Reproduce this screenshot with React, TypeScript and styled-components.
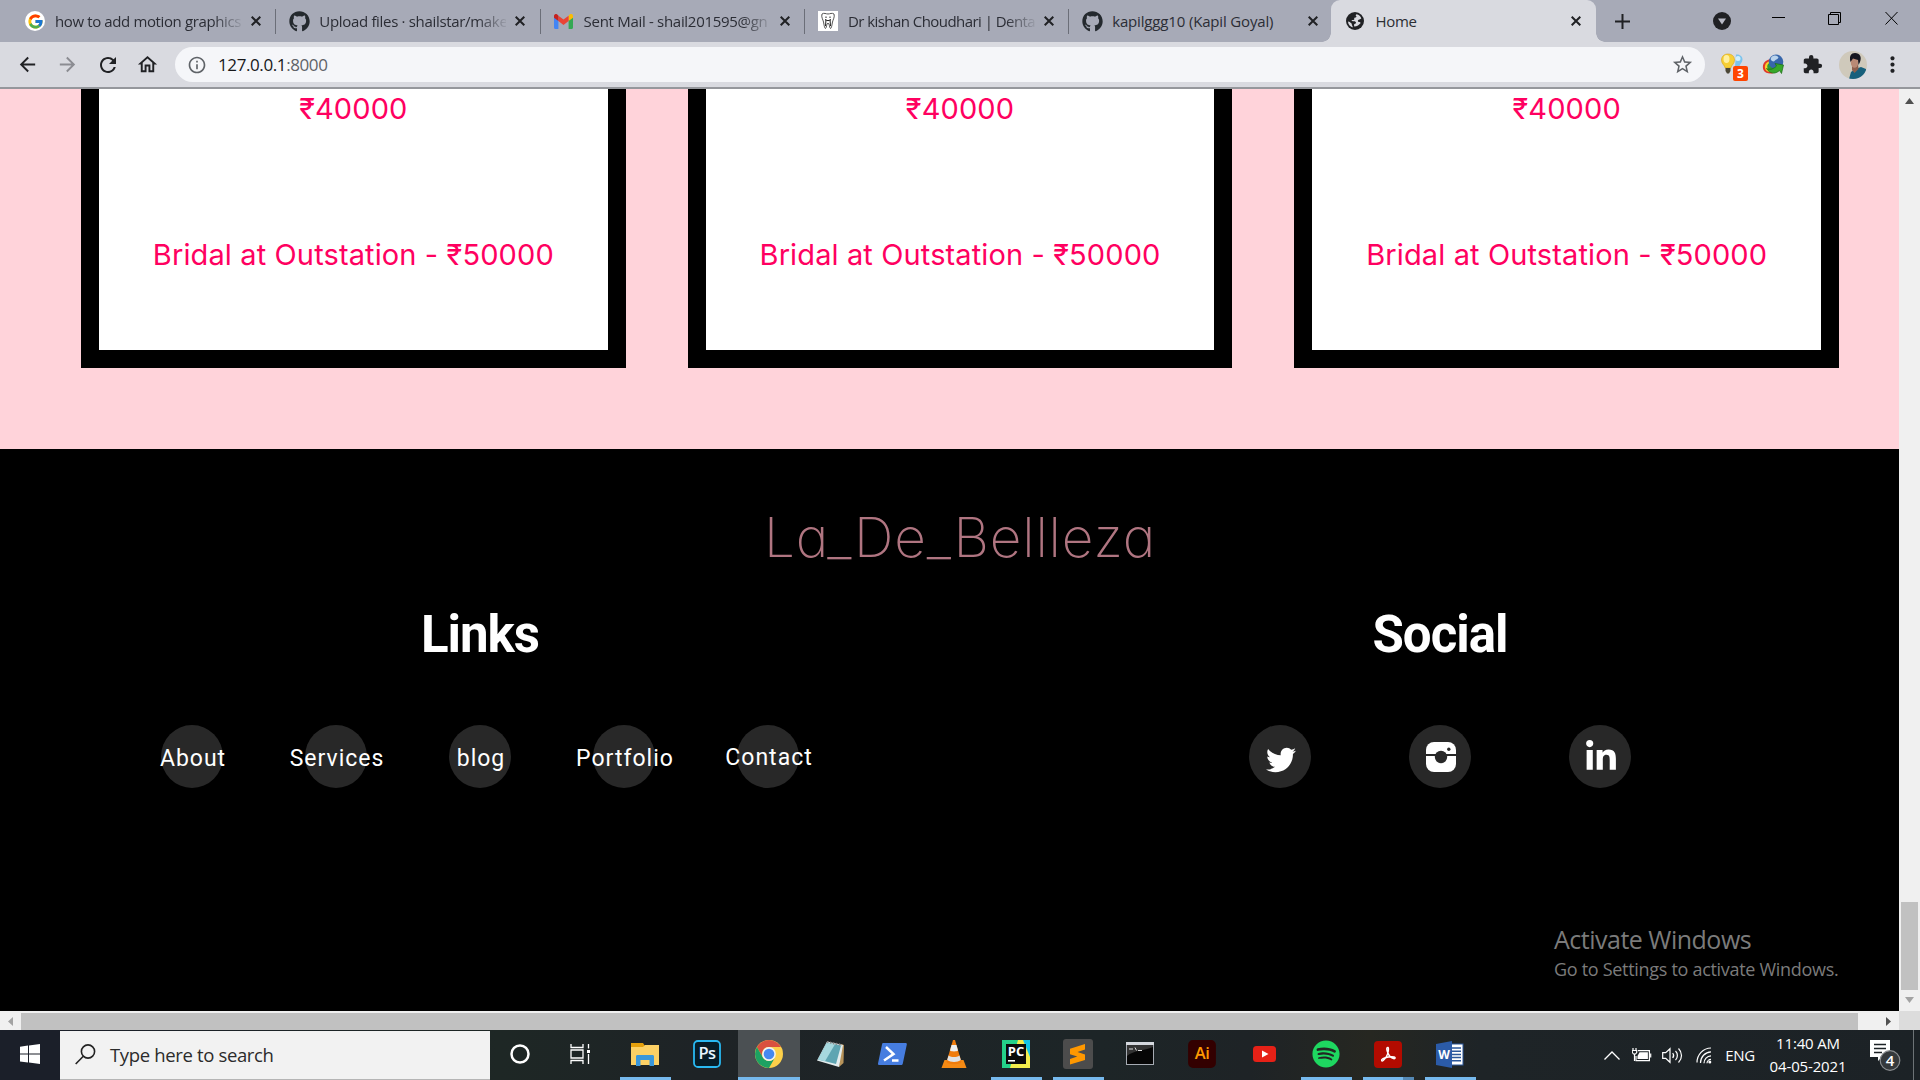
import React from "react";
import styled, { createGlobalStyle, css } from "styled-components";
import { FcGoogle } from "react-icons/fc";
import { FaGithub, FaTwitter, FaLinkedinIn, FaSpotify } from "react-icons/fa";
import { MdArrowBack, MdArrowForward, MdRefresh, MdExtension, MdInfoOutline, MdStarBorder, MdOutlineHome, MdMoreVert } from "react-icons/md";

const Global = createGlobalStyle`
  * { box-sizing: border-box; }
  body { margin: 0; overflow: hidden; background: #000; }
  svg { display: block; flex: none; }
`;

const Desktop = styled.div`
  font-family: "Open Sans", "Noto Sans", sans-serif;
  width: 1920px;
  height: 1080px;
  display: flex;
  flex-direction: column;
  overflow: hidden;
  white-space: nowrap;
`;

/* ---------- browser chrome ---------- */

const TabStrip = styled.header`
  height: 42px;
  background: #a7aab7;
  display: flex;
  padding-left: 12px;
`;

const Tab = styled.div<{ $active?: boolean; $divider?: boolean }>`
  position: relative;
  width: 264.3px;
  height: 42px;
  display: flex;
  align-items: center;
  padding-left: 13px;
  flex: none;
  border-radius: 9px 9px 0 0;
  background: ${(p) => (p.$active ? "#d9dae0" : "transparent")};
  color: ${(p) => (p.$active ? "#2c2e33" : "#2b2d35")};
  ${(p) => p.$divider && css`
    &::after {
      content: "";
      position: absolute;
      right: 0;
      top: 9px;
      width: 1px;
      height: 25px;
      background: #6b6e78;
    }
  `}
  ${(p) => p.$active && css`
    margin-left: -2px;
    padding-left: 14px;
    width: 265px;
    &::before, &::after {
      content: "";
      position: absolute;
      bottom: 0;
      width: 9px;
      height: 9px;
    }
    &::before { left: -9px; background: radial-gradient(circle at 0 0, transparent 8.5px, #d9dae0 9px); }
    &::after { right: -9px; background: radial-gradient(circle at 100% 0, transparent 8.5px, #d9dae0 9px); }
  `}
`;

const Favicon = styled.span`
  width: 20px;
  height: 20px;
  margin-right: 10px;
  display: flex;
  align-items: center;
  justify-content: center;
`;

const GoogleDisc = styled.span`
  width: 20px;
  height: 20px;
  border-radius: 50%;
  background: #fff;
  display: grid;
  place-items: center;
`;

const TabTitle = styled.span<{ $fade?: boolean; $track: number }>`
  width: 187px;
  font-size: 15px;
  letter-spacing: ${(p) => p.$track}px;
  line-height: 20px;
  margin-right: 9px;
  ${(p) => p.$fade && css`mask-image: linear-gradient(90deg, #000 158px, transparent 190px);`}
`;

const StripTools = styled.div`
  flex: 1;
  display: flex;
  align-items: center;
  justify-content: space-between;
  padding-left: 19px;
`;

const WindowButtons = styled.div`
  display: grid;
  grid-template-columns: 56px 56px 56px 58px;
  justify-items: center;
  align-items: center;
`;

const Toolbar = styled.div`
  height: 47px;
  background: #d9dae0;
  border-bottom: 2px solid #95979c;
  display: flex;
  align-items: center;
  color: #202124;
`;

const NavButton = styled.span<{ $w: number; $dim?: boolean }>`
  width: ${(p) => p.$w}px;
  display: flex;
  justify-content: center;
  color: ${(p) => (p.$dim ? "#8b8c92" : "#202124")};
`;

const NavGroup = styled.nav`
  width: 175px;
  display: flex;
  padding-left: 7px;
`;

const AddressBar = styled.div`
  width: 1530px;
  height: 35px;
  border-radius: 18px;
  background: #f5f6f9;
  display: flex;
  align-items: center;
  padding: 0 11px 0 12px;
  color: #5f6368;
`;

const Url = styled.span`
  flex: 1;
  margin-left: 11px;
  font-size: 17px;
  letter-spacing: -0.4px;
  line-height: 24px;
  b { font-weight: 400; color: #17181a; }
`;

const Extensions = styled.div`
  display: grid;
  grid-template-columns: 42px 39px 40px 41px 39px;
  justify-items: center;
  align-items: center;
  margin-left: 6px;
`;

const BadgeHost = styled.span`
  position: relative;
  display: flex;
`;

const CountBadge = styled.span`
  position: absolute;
  left: 13px;
  top: 14px;
  width: 15px;
  height: 15px;
  border-radius: 2px;
  background: #ff4500;
  color: #fff;
  font-size: 12px;
  font-weight: 700;
  line-height: 16px;
  text-align: center;
`;

/* ---------- web page ---------- */

const Viewport = styled.main`
  height: 941px;
  display: grid;
  grid-template: 922px 19px / 1899px 21px;
  position: relative;
`;

const PageClip = styled.div`
  overflow: hidden;
`;

const Page = styled.div`
  width: 1920px;
`;

const Packages = styled.section`
  height: 360px;
  background: #ffd3da;
  padding: 0 81px;
  display: flex;
  gap: 62px;
`;

const PackageCard = styled.article`
  flex: 1;
  height: 279px;
  background: #fff;
  border: 18px solid #000;
  border-top: 0;
  display: flex;
  flex-direction: column;
  align-items: center;
  gap: 106px;
`;

const Price = styled.p`
  margin: 0;
  font-family: Inter, "Noto Sans", sans-serif;
  font-size: 29px;
  letter-spacing: 0.12px;
  line-height: 40px;
  color: #ff0060;
`;

const Footer = styled.footer`
  height: 562px;
  background: #000;
  color: #fff;
  padding-top: 55px;
`;

const Brand = styled.div`
  font-family: Inter, sans-serif;
  font-weight: 250;
  font-size: 55px;
  font-feature-settings: "cv11";
  line-height: 66px;
  letter-spacing: 0.8px;
  text-align: center;
  color: #b07581;
`;

const FooterColumns = styled.div`
  margin-top: 35px;
  display: grid;
  grid-template-columns: 1fr 1fr;
`;

const FooterColumn = styled.div`
  display: flex;
  flex-direction: column;
  align-items: center;
  gap: 60px;
`;

const FooterTitle = styled.h2`
  margin: 0;
  font: 700 51px/60px Roboto, sans-serif;
  letter-spacing: -1px;
`;

const CircleRow = styled.div<{ $gap: number }>`
  display: flex;
  gap: ${(p) => p.$gap}px;
`;

const Circle = styled.a<{ $drop?: number }>`
  width: 62px;
  height: 63px;
  border-radius: 50%;
  background: #282828;
  display: flex;
  align-items: center;
  justify-content: center;
  padding: ${(p) => p.$drop ?? 0}px 0 0 2px;
  font: 450 23px/30px Roboto, sans-serif;
  letter-spacing: 1px;
  color: #fff;
`;

const Watermark = styled.aside`
  position: absolute;
  left: 1554px;
  top: 833px;
  color: #7b7b7b;
  h3 { margin: 0; font-weight: 400; font-size: 25px; line-height: 34px; letter-spacing: -0.5px; }
  p { margin: 1px 0 0; font-size: 18px; line-height: 25px; letter-spacing: -0.3px; }
`;

const VScroll = styled.div`
  background: #f0f0f0;
  display: flex;
  flex-direction: column;
  align-items: center;
  padding: 9px 0 8px;
`;

const VThumb = styled.div`
  width: 17px;
  height: 88px;
  margin: auto 0 7px;
  background: #c1c1c1;
`;

const HScroll = styled.div`
  background: #f0f0f0;
  display: flex;
  align-items: center;
  padding: 2px 8px 0 8px;
`;

const HThumb = styled.div`
  width: 1837px;
  height: 17px;
  margin: 0 28px 0 8px;
  background: #c1c1c1;
`;

const Corner = styled.div`
  background: #dcdcdc;
`;

/* ---------- taskbar ---------- */

const Taskbar = styled.div`
  height: 50px;
  display: flex;
  background: linear-gradient(90deg, #1b1f29 0, #1b1f29 60px, #1e2725 500px, #1e2326 700px, #1d2527 1100px, #1e2326 1250px, #262721 1370px, #1e2427 1480px, #1c2226 100%);
  color: #fff;
`;

const Cell = styled.div<{ $w?: number; $active?: boolean; $running?: boolean }>`
  position: relative;
  width: ${(p) => p.$w ?? 61.95}px;
  flex: none;
  display: flex;
  align-items: center;
  justify-content: center;
  padding-bottom: 2px;
  background: ${(p) => (p.$active ? "#4b5053" : "transparent")};
  ${(p) => (p.$running || p.$active) && css`
    &::after {
      content: "";
      position: absolute;
      bottom: 0;
      left: ${p.$active ? 0 : 6}px;
      right: ${p.$active ? 0 : 5}px;
      height: 3px;
      background: #76b9ed;
    }
  `}
`;

const StackedCell = styled(Cell)`
  &::before {
    content: "";
    position: absolute;
    bottom: 0;
    right: 5px;
    width: 11px;
    height: 3px;
    background: #5589b5;
    z-index: 1;
  }
`;

const Search = styled.div`
  width: 429.5px;
  height: 49px;
  margin-top: 1px;
  background: #f2f2f2;
  border-bottom: 1px solid #b5b5b5;
  display: flex;
  align-items: center;
  gap: 14px;
  padding: 0 0 2px 15px;
  color: #2b2b2b;
  font-size: 18.5px;
  letter-spacing: -0.35px;
`;

const Tray = styled.div`
  margin-left: auto;
  display: grid;
  grid-template-columns: 30px 30px 30px 34px 38px 98px 56px 7px;
  justify-items: center;
  align-items: center;
  font-size: 15px;
`;

const Lang = styled.span`
  letter-spacing: -0.3px;
`;

const Clock = styled.div`
  display: flex;
  flex-direction: column;
  align-items: center;
  line-height: 23px;
  letter-spacing: -0.15px;
`;

const Peek = styled.div`
  width: 1px;
  height: 50px;
  background: #6d7376;
  justify-self: start;
`;

/* ---------- icons ---------- */

const Cross = () => (
  <svg width="10" height="10" viewBox="0 0 10 10"><path d="M.7.7l8.6 8.6M9.3.7L.7 9.3" stroke="#202124" strokeWidth="2" /></svg>
);

const Gmail = () => (
  <svg width="19" height="15" viewBox="0 0 19 15">
    <path d="M0 3v10.5C0 14.3.6 15 1.4 15H4.4V6z" fill="#4285f4" />
    <path d="M14.6 6v9h3c.8 0 1.4-.7 1.4-1.500V3z" fill="#34a853" />
    <path d="M14.6 1.7V7L19 3.7V2c0-1.800-2-2.700-3.300-1.600z" fill="#fbbc04" />
    <path d="M4.400 7V1.700l5.100 3.900 5.100-3.900V7l-5.100 3.900z" fill="#ea4335" />
    <path d="M0 2v1.700L4.400 7V1.700L3.300.4C2-.6 0 .2 0 2z" fill="#c5221f" />
  </svg>
);

const Tooth = () => (
  <svg width="20" height="20" viewBox="0 0 20 20">
    <rect width="20" height="20" fill="#fff" />
    <path d="M4 3c2-1.500 4 0 6 0s4-1.500 6 0c1 3-1 5.500-1.500 8S13.500 17.500 12.500 17.500 11.500 12 10 12 8.500 17.500 7.500 17.500 6 13.500 5.500 11 3 6 4 3z" fill="none" stroke="#555" strokeWidth="1" />
    <path d="M8 5.500v1.500M12 5.500v1.500M7 8.500c2 1.500 4 1.500 6 0M8 8.500l-.5 6.500M12 8.500l.5 6.500" fill="none" stroke="#222" strokeWidth="1" />
  </svg>
);

const Globe = () => (
  <svg width="18" height="18" viewBox="0 0 18 18">
    <circle cx="9" cy="9" r="9" fill="#202124" />
    <path d="M10.500 2.200c-1 .5-1 1.500-.2 2 .6.500-.2 1.300-1.200 1.300-.9 0-1 .8-.8 1.500.2.700-.6 1-1.400 1H5.500c.2 1 1 1.200 2.200 1.200 1.500 0 2.300.7 2.300 1.600 0 .8-.8 1-1.500 1.200-.6.200-.4 1.300-.3 2.500 3-.2 5-1.500 6.500-3.500-.8-1.200-2-.6-2.600-1.400-.7-.9.200-1.900 1.300-2.100 1-.2 1.200-1 1.900-1-.5-2.200-2.300-4-4.800-4.300z" fill="#d9dae0" />
    <path d="M2 9.500c1.500 0 2.300 1 3.300 1.800.8.700.3 1.700 1 2.500.4.500.4 1.200.4 1.600C4 14.500 2 12.400 2 9.500z" fill="#d9dae0" />
  </svg>
);

const Bulbs = () => (
  <svg width="24" height="26" viewBox="0 0 24 26">
    <path d="M16 2.500c4-.5 6.500 2 6.500 5 0 3-2.500 4-3 7H15z" fill="#7cc3ec" />
    <circle cx="18" cy="6.500" r="2.500" fill="#d0eefc" />
    <path d="M8 2C4 2 1.500 4.500 1.500 8c0 4 3.200 5 3.700 8h5.600c.5-3 3.700-4 3.700-8C14.500 4.500 12 2 8 2z" fill="#f7cf35" stroke="#d9a514" strokeWidth=".6" />
    <ellipse cx="6.500" cy="7" rx="3" ry="4" fill="#fff0a0" />
    <path d="M5.500 16h5v3L9 21.500H7L5.500 19z" fill="#4b4636" />
  </svg>
);

const Idm = () => (
  <svg width="22" height="22" viewBox="0 0 22 22">
    <path d="M8 5C1 7 0 12 1.500 16c2 4 7 4 10 3l-3-9z" fill="#e03b2b" />
    <path d="M8 7c-5 1.500-6 5.500-4.500 8.500s6 3 8.500 2z" fill="#f6d32c" />
    <path d="M9 8.500c-4 1-4.500 4-3 6.500s6 2 7 1z" fill="#2c9b3a" />
    <circle cx="14" cy="7.800" r="7.300" fill="#3766ab" />
    <path d="M9.500 3c3-2.500 6-1.500 7 .5-.5 2-2.500 1.500-3.500 3s-3 1-4-.5c-.6-1-.2-2 .5-3z" fill="#b9d3ec" />
    <path d="M4.500 14.500c4 2 7.500 0 10-2.500L13 9.500l8.500 1.500-2 8.500-2-3C13 20.500 8 20 4.500 14.500z" fill="#37a82a" stroke="#1b6a14" strokeWidth=".7" />
  </svg>
);

const Avatar = () => (
  <svg width="28" height="28" viewBox="0 0 28 28">
    <defs><clipPath id="face"><circle cx="14" cy="14" r="14" /></clipPath></defs>
    <g clipPath="url(#face)">
      <rect width="28" height="28" fill="#cfc9bb" />
      <path d="M10 28l2-7 4-3 6-2 5 2v10z" fill="#17607c" />
      <path d="M13 13h6l.5 5-4 4-2.500-3z" fill="#8d5f4d" />
      <ellipse cx="15.500" cy="11.500" rx="3.700" ry="5.200" fill="#b98a75" />
      <path d="M11.500 11C10 5 12 2 16 2c5 0 7 4 5 9l-1.500 3L19 9l-5-1.500z" fill="#17161f" />
    </g>
  </svg>
);

const Instagram = () => (
  <svg width="30" height="30" viewBox="0 0 30 30">
    <rect width="30" height="30" rx="8" fill="#fff" />
    <path d="M0 13h30" stroke="#282828" strokeWidth="2" />
    <circle cx="15" cy="15" r="6.200" fill="#282828" />
    <circle cx="22.800" cy="7.200" r="1.700" fill="#282828" />
  </svg>
);

const Windows = () => (
  <svg width="20" height="20" viewBox="0 0 20 20" fill="#fff"><path d="M0 2.800l8-1.200v8H0zM9 1.500L20 0v9.600H9zM0 10.600h8v8l-8-1.200zM9 10.600h11V20L9 18.600z" /></svg>
);

const Magnifier = () => (
  <svg width="21" height="21" viewBox="0 0 21 21" fill="none" stroke="#222" strokeWidth="1.600"><circle cx="13" cy="7.500" r="6.600" /><path d="M8.300 12.200L.7 20" /></svg>
);

const TaskView = () => (
  <svg width="21" height="20" viewBox="0 0 21 20" fill="none" stroke="#fff" strokeWidth="1.300">
    <path d="M1 0v3.500h12V0M1 20v-3.500h12V20M1 6h12v8H1zM18.500 0v4.500M18.500 10v10" /><path d="M17 6h3v3h-3z" fill="#fff" stroke="none" />
  </svg>
);

const Folder = () => (
  <svg width="28" height="24" viewBox="0 0 28 24">
    <path d="M0 1h12l2 3v4H0z" fill="#e5a00c" /><path d="M0 5h12l2-2h14v20H0z" fill="#fdd165" />
    <path d="M5 24V14.500c0-1 .6-1.500 1.500-1.500h15c.9 0 1.500.5 1.500 1.500V24h-4.500v-6h-9v6z" fill="#3b97da" />
  </svg>
);

const AdobeTile = ({ label, fg, bg, edge }: { label: string; fg: string; bg: string; edge: string }) => (
  <svg width="28" height="28" viewBox="0 0 28 28">
    <rect x="1" y="1" width="26" height="26" rx="4" fill={bg} stroke={edge} strokeWidth="1.800" />
    <text x="14" y="19" textAnchor="middle" fontFamily="Open Sans" fontWeight="600" fontSize="16.500" letterSpacing="-.5" fill={fg}>{label}</text>
  </svg>
);

const Chrome = () => (
  <svg width="28" height="28" viewBox="0 0 28 28">
    <circle cx="14" cy="14" r="14" fill="#fdd04a" />
    <path d="M1.900 7A14 14 0 0 1 26.100 7H14a7 7 0 0 0-6.100 10.500z" fill="#d9503f" />
    <path d="M1.900 7A14 14 0 0 0 14 28l6-10.500A7 7 0 0 1 7.900 17.500z" fill="#1da162" />
    <circle cx="14" cy="14" r="6.900" fill="#f1f1f1" /><circle cx="14" cy="14" r="5.300" fill="#4688f1" />
  </svg>
);

const Notepad = () => (
  <svg width="28" height="28" viewBox="0 0 28 28">
    <path d="M24 4l3 1-.5 18-4.500 4z" fill="#b7935a" />
    <path d="M10 1.500L26 5l-4 22L0 20.500z" fill="#e3eced" />
    <path d="M10 2.500L24 5.500l-5 18.500L1 19.500z" fill="#5fa5b2" /><path d="M10 2.500l8 1.700L8 21.200 1 19.500z" fill="#a6d8de" />
    <path d="M10 2l15 3" stroke="#888" strokeWidth="2" strokeDasharray="1.500 1.500" />
  </svg>
);

const PowerShell = () => (
  <svg width="29" height="22" viewBox="0 0 29 22">
    <path d="M5 0h22.500c1 0 1.500.6 1.300 1.500l-4 19c-.2 1-.9 1.500-1.800 1.500H1c-.8 0-1.200-.6-1-1.500l4-19C4.200.6 4.500 0 5 0z" fill="#467de0" />
    <path d="M8 4l7.500 7L6 17.500M14 17.500h6.500" stroke="#fff" strokeWidth="2.500" fill="none" />
  </svg>
);

const Vlc = () => (
  <svg width="26" height="28" viewBox="0 0 26 28">
    <path d="M3.500 20h19l3 8H.5z" fill="#f58a14" />
    <path d="M12 0h2l6.500 22c-2 3-13 3-15 0z" fill="#f07c0c" />
    <path d="M10.500 5h5l1.500 5.500c-2 1.200-6 1.200-8 0z" fill="#eceff1" /><path d="M7.500 15.500c3 2 8 2 11 0l1.300 4.500c-3 2.500-10.500 2.500-13.600 0z" fill="#dfe3e6" />
  </svg>
);

const PyCharm = () => (
  <svg width="28" height="28" viewBox="0 0 28 28">
    <rect width="28" height="28" fill="#24d18a" />
    <path d="M14 0h8l6 14v14H0l2-4z" fill="#f2ec4c" />
    <path d="M0 0h16L8 28H0z" fill="#24d18a" />
    <path d="M21 0h7v17z" fill="#12c3e8" />
    <rect x="4" y="4" width="20" height="20" fill="#0b0b0b" />
    <text x="14" y="15.500" textAnchor="middle" fontFamily="Open Sans" fontWeight="700" fontSize="13" fill="#fff">PC</text>
    <path d="M6 20.800h7" stroke="#fff" strokeWidth="1.600" />
  </svg>
);

const Sublime = () => (
  <svg width="30" height="30" viewBox="0 0 30 30">
    <rect width="30" height="30" rx="3" fill="#4c4c4c" />
    <path d="M22 5v5.500L14.500 13l7.500 2.400V21L7 25.500V20l7.300-2.400L7 15.200V9.700z" fill="#ff9800" />
  </svg>
);

const Terminal = () => (
  <svg width="28" height="24" viewBox="0 0 28 24">
    <rect x=".5" y=".5" width="27" height="22" fill="#060606" stroke="#a6abb3" /><path d="M0 0h28v3H0z" fill="#d5d8de" /><path d="M1 14C8 8 18 9 27 5V3H1z" fill="#333" />
    <path d="M4 6v2M6 6v2M9 5.500l1.500 3M12 8.500h4" stroke="#ddd" strokeWidth="1" />
  </svg>
);

const YouTube = () => (
  <svg width="23" height="16" viewBox="0 0 23 16"><rect width="23" height="16" rx="3.500" fill="#e62117" /><path d="M9 4.500l6.500 3.500L9 11.500z" fill="#fff" /></svg>
);

const Acrobat = () => (
  <svg width="28" height="27" viewBox="0 0 28 27">
    <rect width="28" height="27" rx="4" fill="#b30b00" />
    <path d="M14 6.500c-1.800-.3-1.300 3 0 5.800 1 2.300 3.200 4.800 5.500 5.300 1.800.4 2.300-1.200.5-1.700-2.800-.7-8.500.3-11 1.800-2.300 1.400-1.300 3 .2 1.800 2-1.800 4.500-6 5-9 .3-1.800.5-3.800-.2-4z" fill="none" stroke="#fff" strokeWidth="1.500" />
  </svg>
);

const Word = () => (
  <svg width="28" height="27" viewBox="0 0 28 27">
    <rect x="14" y="3" width="13" height="21" fill="#fff" stroke="#2b579a" />
    <path d="M16 7h9M16 10.200h9M16 13.400h9M16 16.600h9M16 19.800h9" stroke="#2b579a" strokeWidth="1.500" />
    <path d="M0 3L16 0v27L0 24z" fill="#2b5ba8" />
    <text x="8" y="18" textAnchor="middle" fontFamily="Open Sans" fontWeight="700" fontSize="12" fill="#fff">W</text>
  </svg>
);

const Battery = () => (
  <svg width="20" height="14" viewBox="0 0 20 14" fill="none" stroke="#fff" strokeWidth="1.200">
    <path d="M6 2.600h11.400v10H4V8M18.700 5.500v4" /><path d="M7.500 4.300h8.400v6.600H5.500V8z" fill="#fff" stroke="none" />
    <path d="M1 0v2M4 0v2M.3 2.500h4.400v2L3.500 6h-2L.3 4.500zM2.500 6v7" />
  </svg>
);

const Speaker = () => (
  <svg width="21" height="17" viewBox="0 0 21 17" fill="none" stroke="#fff" strokeWidth="1.200">
    <path d="M.7 5.700h3L8 1.700v13.600l-4.300-4h-3zM10.700 6c1.200 1.500 1.200 3.500 0 5M13.500 4c2.500 2.500 2.500 6.500 0 9M16.500 1.500c4 4 4 10 0 14" />
  </svg>
);

const Wifi = () => (
  <svg width="16" height="17" viewBox="0 0 16 17" fill="none" stroke="#fff" strokeWidth="1.200">
    <path d="M1 15.500C1 8 7 1 15 1M4.500 16C4.500 10 9 5 15 4.800M8 16.300c0-4 3-7.300 7-7.500M11 16.300c0-2 1.700-4 4-4" /><circle cx="13.800" cy="15" r="1.500" fill="#fff" stroke="none" />
  </svg>
);

const Notifications = () => (
  <svg width="32" height="34" viewBox="0 0 32 34">
    <path d="M1 2h20v17h-8l-4 4v-4H1z" fill="#fff" /><path d="M5 6.500h12M5 10.500h12M5 14.500h8" stroke="#1c2226" strokeWidth="1.300" />
    <circle cx="21" cy="22.500" r="9.800" fill="#35393c" stroke="#8a8d90" strokeWidth="1.200" />
    <text x="21" y="27.800" textAnchor="middle" fontFamily="Open Sans" fontWeight="600" fontSize="15" fill="#fff">4</text>
  </svg>
);

/* ---------- content ---------- */

const tabs = [
  { title: "how to add motion graphics", icon: <GoogleDisc><FcGoogle size={17} /></GoogleDisc>, fade: true, divider: true, track: -0.38 },
  { title: "Upload files · shailstar/make", icon: <FaGithub size={21} color="#24292e" />, fade: true, divider: true, track: -0.32 },
  { title: "Sent Mail - shail201595@gn", icon: <Gmail />, fade: true, divider: true, track: -0.3 },
  { title: "Dr kishan Choudhari | Denta", icon: <Tooth />, fade: true, divider: true, track: -0.55 },
  { title: "kapilggg10 (Kapil Goyal)", icon: <FaGithub size={21} color="#24292e" />, track: -0.16 },
  { title: "Home", icon: <Globe />, active: true, track: -0.3 },
];

const links = ["About", "Services", "blog", "Portfolio", "Contact"];

const apps = [
  { icon: <Folder />, running: true },
  { icon: <AdobeTile label="Ps" fg="#e8f6ff" bg="#071d28" edge="#29b9f2" /> },
  { icon: <Chrome />, active: true },
  { icon: <Notepad /> },
  { icon: <PowerShell /> },
  { icon: <Vlc /> },
  { icon: <PyCharm />, running: true },
  { icon: <Sublime />, running: true },
  { icon: <Terminal /> },
  { icon: <AdobeTile label="Ai" fg="#ff9a00" bg="#330000" edge="#330000" /> },
  { icon: <YouTube /> },
  { icon: <FaSpotify size={28} color="#1ed760" />, running: true },
];

export default function App() {
  return (
    <Desktop>
      <Global />
      <TabStrip>
        {tabs.map((t) => (
          <Tab key={t.title} $active={t.active} $divider={t.divider}>
            <Favicon>{t.icon}</Favicon>
            <TabTitle $fade={t.fade} $track={t.track}>{t.title}</TabTitle>
            <Cross />
          </Tab>
        ))}
        <StripTools>
          <svg width="15" height="15" viewBox="0 0 15 15"><path d="M7.500 0v15M0 7.500h15" stroke="#202124" strokeWidth="2" /></svg>
          <WindowButtons>
            <svg width="18" height="18" viewBox="0 0 18 18"><circle cx="9" cy="9" r="9" fill="#202124" /><path d="M5 6.500h8L9 12.500z" fill="#b9bbc6" /></svg>
            <svg width="13" height="9" viewBox="0 0 13 9"><path d="M0 .5h13" stroke="#000" /></svg>
            <svg width="13" height="19" viewBox="0 0 13 19" fill="none" stroke="#000"><path d="M.5 2.500h10v10H.5zM2.500 2V.5h10v10H11" /></svg>
            <svg width="13" height="19" viewBox="0 0 13 19"><path d="M.5 0l12 12.500M12.500 0L.5 12.500" stroke="#000" /></svg>
          </WindowButtons>
        </StripTools>
      </TabStrip>
      <Toolbar>
        <NavGroup>
          <NavButton $w={40}><MdArrowBack size={23} /></NavButton>
          <NavButton $w={40} $dim><MdArrowForward size={23} /></NavButton>
          <NavButton $w={41}><MdRefresh size={24} /></NavButton>
          <NavButton $w={38}><MdOutlineHome size={23} /></NavButton>
        </NavGroup>
        <AddressBar>
          <MdInfoOutline size={20} />
          <Url><b>127.0.0.1</b>:8000</Url>
          <MdStarBorder size={23} />
        </AddressBar>
        <Extensions>
          <BadgeHost><Bulbs /><CountBadge>3</CountBadge></BadgeHost>
          <Idm />
          <MdExtension size={21} />
          <Avatar />
          <MdMoreVert size={25} />
        </Extensions>
      </Toolbar>
      <Viewport>
        <PageClip>
          <Page>
            <Packages>
              {[0, 1, 2].map((n) => (
                <PackageCard key={n}>
                  <Price>₹40000</Price>
                  <Price>Bridal at Outstation - ₹50000</Price>
                </PackageCard>
              ))}
            </Packages>
            <Footer>
              <Brand>La_De_Bellleza</Brand>
              <FooterColumns>
                <FooterColumn>
                  <FooterTitle>Links</FooterTitle>
                  <CircleRow $gap={82}>
                    {links.map((l) => <Circle key={l} $drop={l === "Contact" ? 3 : 5}>{l}</Circle>)}
                  </CircleRow>
                </FooterColumn>
                <FooterColumn>
                  <FooterTitle>Social</FooterTitle>
                  <CircleRow $gap={98}>
                    <Circle $drop={6}><FaTwitter size={30} /></Circle>
                    <Circle $drop={1}><Instagram /></Circle>
                    <Circle><FaLinkedinIn size={34} /></Circle>
                  </CircleRow>
                </FooterColumn>
              </FooterColumns>
            </Footer>
          </Page>
        </PageClip>
        <VScroll>
          <svg width="9" height="6" viewBox="0 0 9 6"><path d="M4.500 0L9 6H0z" fill="#505050" /></svg>
          <VThumb />
          <svg width="9" height="6" viewBox="0 0 9 6"><path d="M0 0h9L4.500 6z" fill="#a3a3a3" /></svg>
        </VScroll>
        <HScroll>
          <svg width="5" height="9" viewBox="0 0 5 9"><path d="M5 0v9L0 4.500z" fill="#a3a3a3" /></svg>
          <HThumb />
          <svg width="5" height="9" viewBox="0 0 5 9"><path d="M0 0v9l5-4.500z" fill="#505050" /></svg>
        </HScroll>
        <Corner />
        <Watermark>
          <h3>Activate Windows</h3>
          <p>Go to Settings to activate Windows.</p>
        </Watermark>
      </Viewport>
      <Taskbar>
        <Cell $w={60}><Windows /></Cell>
        <Search><Magnifier />Type here to search</Search>
        <Cell><svg width="20" height="20" viewBox="0 0 20 20"><circle cx="10" cy="10" r="8.500" fill="none" stroke="#fff" strokeWidth="2.500" /></svg></Cell>
        <Cell $w={58}><TaskView /></Cell>
        <Cell $w={4.3} />
        {apps.map((a, i) => <Cell key={i} $active={a.active} $running={a.running}>{a.icon}</Cell>)}
        <StackedCell $running><Acrobat /></StackedCell>
        <Cell $running><Word /></Cell>
        <Tray>
          <svg width="16" height="9" viewBox="0 0 16 9"><path d="M.5 8.500L8 1l7.500 7.500" fill="none" stroke="#fff" strokeWidth="1.300" /></svg>
          <Battery />
          <Speaker />
          <Wifi />
          <Lang>ENG</Lang>
          <Clock><span>11:40 AM</span><span>04-05-2021</span></Clock>
          <Notifications />
          <Peek />
        </Tray>
      </Taskbar>
    </Desktop>
  );
}
